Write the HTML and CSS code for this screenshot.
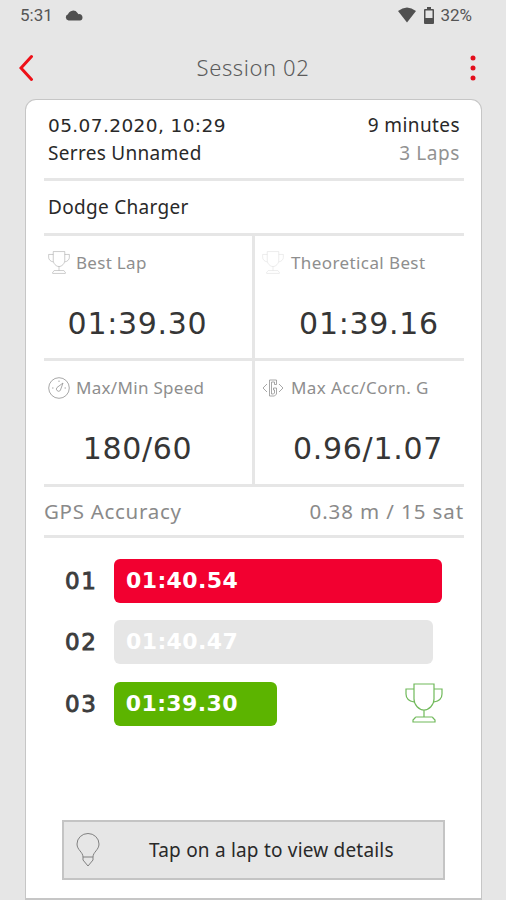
FILE: index.html
```
<!DOCTYPE html>
<html lang="en">
<head>
    <meta charset="UTF-8">
    <meta name="viewport" content="width=device-width, initial-scale=1.0">
    <title>Session 02</title>
    <link rel="stylesheet" href="styles.css">
</head>
<body>
    <svg width="0" height="0" class="defs">
        <symbol id="trophy" viewBox="0 0 38 40">
            <path d="M9 1h20v15c0 6-5 11-10 11S9 22 9 16zM9 6H1v5c0 4 3 7 8 8M29 6h8v5c0 4-3 7-8 8M19 27v7M10 35q0-1 1-1h16q1 0 1 1l2 2v2H8v-2z"/>
        </symbol>
    </svg>

    <div class="status-bar">
        <span class="time">5:31</span>
        <svg class="cloud" width="18" height="11" viewBox="0 0 18 11"><path d="M3.500 10.500a3.200 3.200 0 0 1-.5-6.200A5.300 5.300 0 0 1 12.500 3l1 1.200a3.200 3.200 0 0 1 4 3.200c0 1.700-1 3.100-2.500 3.100z"/></svg>
        <svg class="wifi" width="20" height="16" viewBox="0 0 20 16"><path d="M1 4Q10-3 19 4L10 15.500z"/></svg>
        <svg class="battery" width="12" height="17" viewBox="0 0 12 17"><path fill-rule="evenodd" d="M4 0h4v2h2q1 0 1 1v13q0 1-1 1H2q-1 0-1-1V3q0-1 1-1h2zM2.500 3.500V11h7V3.500z"/></svg>
        <span class="percent">32%</span>
    </div>

    <header>
        <svg class="back" width="16" height="28" viewBox="0 0 16 28"><path d="M12.500 2.500L2 14l10.500 11.500"/></svg>
        <h1>Session 02</h1>
        <svg class="menu" width="6" height="26" viewBox="0 0 6 26"><circle cx="3" cy="3" r="2.500"/><circle cx="3" cy="13" r="2.500"/><circle cx="3" cy="23" r="2.500"/></svg>
    </header>

    <main class="card">
        <section class="info">
            <div><span class="date">05.07.2020, 10:29</span><span class="duration">9 minutes</span></div>
            <div><span class="track">Serres Unnamed</span><span class="laps-count">3 Laps</span></div>
        </section>
        <section class="car">Dodge Charger</section>

        <section class="stats">
            <div class="stat">
                <h2><svg class="icon" width="22" height="23"><use href="#trophy"/></svg>Best Lap</h2>
                <p>01:39.30</p>
            </div>
            <div class="stat right">
                <h2><svg class="icon pale" width="22" height="23"><use href="#trophy"/></svg>Theoretical Best</h2>
                <p>01:39.16</p>
            </div>
            <div class="stat">
                <h2><svg class="icon" width="22" height="22" viewBox="0 0 22 22"><circle cx="11" cy="11" r="10.300"/><path d="M15 6l-6 4.500a2.200 2.200 0 1 0 3.300 3zM4 11h1.500M16.500 11H18M11 3.500V5"/></svg>Max/Min Speed</h2>
                <p>180/60</p>
            </div>
            <div class="stat right wide">
                <h2><svg class="icon" width="22" height="18" viewBox="0 0 22 18"><path d="M5 5L1 9l4 4M17 5l4 4-4 4M14.500 5.500V1H7.500v16h5l2-2V9h-3M14.500 5.500h-2V3H9.500v12h2l1-1v-3h-1V9"/></svg>Max Acc/Corn. G</h2>
                <p>0.96/1.07</p>
            </div>
        </section>

        <section class="gps"><span>GPS Accuracy</span><span class="gps-value">0.38 m / 15 sat</span></section>

        <section class="laps">
            <div class="lap"><span class="lap-no">01</span><div class="bar slow">01:40.54</div></div>
            <div class="lap"><span class="lap-no">02</span><div class="bar normal">01:40.47</div></div>
            <div class="lap"><span class="lap-no">03</span><div class="bar best">01:39.30</div><svg class="award" width="38" height="40"><use href="#trophy"/></svg></div>
        </section>

        <div class="hint">
            <svg width="25" height="34" viewBox="0 0 25 34"><path d="M7 24c0-5-6-7-6-13a11 10.500 0 0 1 22 0c0 6-6 8-6 13zM7 24v3l5 6 5-6v-3"/></svg>
            <span>Tap on a lap to view details</span>
        </div>
    </main>
</body>
</html>
```
FILE: styles.css
```
* {
    box-sizing: border-box;
}
body {
    margin: 0;
    height: 900px;
    overflow: hidden;
    background-color: #e6e6e6;
    color: #292929;
    font-family: "Noto Sans", sans-serif;
    font-size: 19px;
}
h1, h2, p {
    margin: 0;
    font-weight: normal;
}
svg {
    display: block;
    flex: none;
    fill: none;
}
.defs {
    display: none;
}
.status-bar {
    display: flex;
    align-items: center;
    height: 30px;
    padding: 0 34px 0 20px;
    color: #555;
    font-family: Roboto, sans-serif;
    font-size: 17px;
}
.status-bar svg {
    fill: #505050;
}
.cloud {
    margin-left: 12px;
}
.wifi {
    margin-left: auto;
}
.battery {
    margin: 0 5px 0 6px;
}
header {
    display: flex;
    align-items: center;
    justify-content: space-between;
    height: 69px;
    padding: 6px 30px 0 19px;
}
header h1 {
    margin: -1px 0 0 1px;
    color: #5c5c5c;
    font-size: 22px;
    font-weight: 300;
    letter-spacing: 0.6px;
}
.back {
    stroke: #ee1018;
    stroke-width: 3;
    stroke-linecap: round;
}
.menu {
    fill: #e30f1c;
}
.card {
    height: 801px;
    margin: 0 24px 0 25px;
    padding: 0 17px 0 18px;
    border: 1px solid #c6c6c6;
    border-width: 1px 1px 2px;
    border-radius: 11px 11px 0 0;
    background: #fff;
}
.info {
    height: 81px;
    padding: 12px 4px 0;
    border-bottom: 3px solid #e6e6e6;
}
.info div {
    display: flex;
    align-items: center;
    justify-content: space-between;
    height: 27px;
}
.date {
    font-family: "DejaVu Sans", sans-serif;
    font-size: 18.5px;
    letter-spacing: 0.4px;
}
.duration {
    margin-top: -1px;
    letter-spacing: 0.4px;
}
.track {
    letter-spacing: 0.3px;
}
.laps-count {
    color: #929292;
    letter-spacing: 0.6px;
}
.car {
    height: 55px;
    padding-left: 4px;
    border-bottom: 3px solid #e6e6e6;
    line-height: 52px;
    letter-spacing: 0.3px;
}
.stats {
    display: grid;
    grid-template-columns: 211px 209px;
    grid-template-rows: 125px 126px;
}
.stat {
    padding: 14px 0 0 4px;
    border-right: 3px solid #e6e6e6;
    border-bottom: 3px solid #e6e6e6;
}
.stat.right {
    padding-left: 7px;
    border-right: 0;
}
.stat h2 {
    display: flex;
    align-items: center;
    gap: 6px;
    height: 25px;
    color: #8e8e8e;
    font-size: 17px;
    letter-spacing: 0.3px;
}
.stat.right h2 {
    gap: 7px;
    letter-spacing: 0.4px;
}
.stat p {
    margin-top: 14px;
    padding-right: 25px;
    color: #363636;
    font-family: "DejaVu Sans", sans-serif;
    font-size: 30px;
    line-height: 70px;
    letter-spacing: 0.7px;
    text-align: center;
}
.stat.right p {
    padding: 0 0 0 12px;
}
.stat.wide p {
    padding-left: 10px;
}
.icon {
    stroke: #929292;
    stroke-width: 0.8;
}
.pale {
    stroke: #d7d7d7;
}
.gps {
    display: flex;
    justify-content: space-between;
    height: 51px;
    border-bottom: 3px solid #e6e6e6;
    color: #8a8a8a;
    font-size: 20.5px;
    line-height: 48px;
    letter-spacing: 0.7px;
}
.gps-value {
    letter-spacing: 0.9px;
}
.laps {
    display: flex;
    flex-direction: column;
    gap: 18px;
    padding: 21px 21px 0;
}
.lap {
    display: flex;
    align-items: center;
    height: 43.5px;
}
.lap-no {
    width: 49px;
    color: #3d3d3d;
    font-family: "DejaVu Sans", sans-serif;
    font-size: 23px;
    -webkit-text-stroke: 0.9px;
    letter-spacing: 1.5px;
}
.bar {
    height: 44px;
    padding-left: 12px;
    border-radius: 6px;
    color: #fff;
    font-family: "DejaVu Sans", sans-serif;
    font-size: 22px;
    font-weight: bold;
    line-height: 44px;
    letter-spacing: 0.4px;
}
.slow {
    width: 328px;
    background: #f20030;
}
.normal {
    width: 319px;
    background: #e6e6e6;
}
.best {
    width: 164px;
    background: #5cb400;
}
.award {
    margin: -1px 0 0 128px;
    stroke: #70b95a;
    stroke-width: 1.2;
}
.hint {
    display: flex;
    align-items: center;
    width: 383px;
    height: 60px;
    margin: 94px 0 0 18px;
    padding-left: 12px;
    border: 2px solid #c4c4c4;
    background: #e6e6e6;
    font-size: 19px;
    letter-spacing: 0.2px;
}
.hint svg {
    margin-right: 48px;
    stroke: #808080;
}
```
